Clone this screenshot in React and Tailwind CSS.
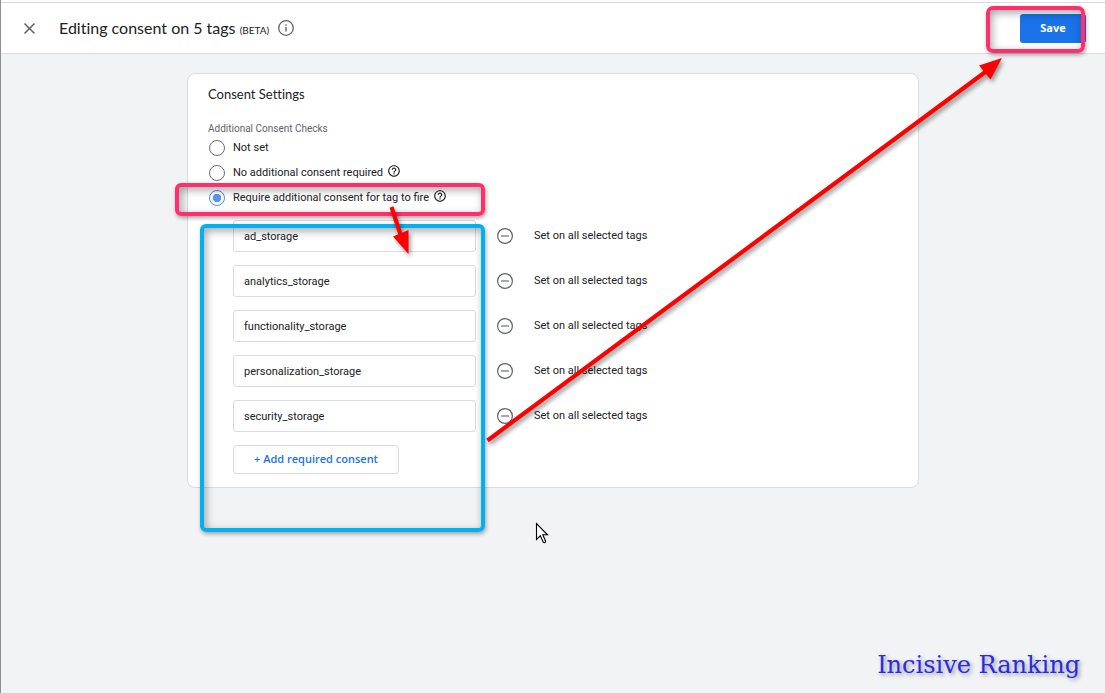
import React, { useState } from 'react'
import { MdClose, MdHelpOutline } from 'react-icons/md'

const checks = [
  { id: 'not-set', label: 'Not set', help: false },
  { id: 'none', label: 'No additional consent required', help: true },
  { id: 'require', label: 'Require additional consent for tag to fire', help: true },
]

const initialConsents = [
  'ad_storage',
  'analytics_storage',
  'functionality_storage',
  'personalization_storage',
  'security_storage',
]

// slivers of the page behind the sheet: [y, height, color]
const slivers = [
  [74, 1, '#1f4f9c'], [90, 1, '#5a4a3c'], [92, 3, '#3f6f94'], [95, 1, '#2b3f66'],
  [106, 1, '#6b5f50'], [107, 5, '#4f8296'], [122, 6, '#27406f'], [143, 1, '#2a5580'],
  [189, 1, '#8a5a40'], [190, 4, '#5c2f4a'], [292, 1, '#1f5fae'], [294, 2, '#5f7f9c'],
  [297, 1, '#2f4fa0'], [324, 3, '#1f5fae'], [329, 1, '#3f5f9c'], [453, 2, '#2f7fae'],
  [455, 2, '#2a3f9c'], [483, 1, '#1f4f5c'], [487, 4, '#4f8f8c'], [515, 1, '#1f4f5c'],
  [519, 4, '#4f8f8c'], [547, 2, '#2f6f9c'], [553, 2, '#4f5f9c'], [581, 2, '#5f4f9c'],
  [584, 2, '#1f5f8c'], [612, 2, '#1f3f9c'], [617, 1, '#2f4f7c'],
]

/* ───── Icons ───── */
function InfoIcon() {
  return (
    <svg width="18" height="18" viewBox="0 0 18 18" fill="none" stroke="#5f6368" aria-hidden="true">
      <circle cx="9" cy="9" r="7.3" strokeWidth="1.3" />
      <path d="M9 8v4.6M9 5.2v1.6" strokeWidth="1.4" />
    </svg>
  )
}

function MinusIcon() {
  return (
    <svg width="18" height="18" viewBox="0 0 18 18" fill="none" stroke="#5f6368" aria-hidden="true">
      <circle cx="9" cy="9" r="7.4" strokeWidth="1.2" />
      <path d="M5 9h8" strokeWidth="1.1" />
    </svg>
  )
}

function Pointer() {
  return (
    <svg
      width="14"
      height="22"
      viewBox="0 0 14 22"
      className="absolute left-[534px] top-[522px]"
      aria-hidden="true"
    >
      <path
        d="M1.5 1.5v16l3.800-3.700 3 6.400c.8 1 2.600.4 2.300-1L7.800 12.800h4.700z"
        fill="#fff"
        stroke="#000"
        strokeWidth="1.1"
      />
    </svg>
  )
}

/* ───── Arrows drawn over the sheet ───── */
function Arrows() {
  return (
    <svg
      width="1105"
      height="693"
      viewBox="0 0 1105 693"
      className="pointer-events-none absolute -left-px top-0 drop-shadow-[2px_3px_2px_rgba(0,0,0,0.4)]"
      aria-hidden="true"
    >
      <g stroke="#ff0000" fill="#ff0000">
        <path d="M487.5 440.5L986 71.5" strokeWidth="4.2" />
        <path d="M1002 58L979 65.5L990.5 79.5z" stroke="none" />
        <path d="M391.5 207L401 236" strokeWidth="4.2" />
        <path d="M408.5 254L393 236.5L408.5 230z" stroke="none" />
      </g>
    </svg>
  )
}

/* ───── Radio row ───── */
function CheckOption({ option, checked, onChange }) {
  return (
    <div className="flex h-[25px] items-center">
      <input
        type="radio"
        id={option.id}
        name="consent-check"
        checked={checked}
        onChange={() => onChange(option.id)}
        className="m-0 size-4 shrink-0 appearance-none rounded-full border border-[#6b6f74] bg-white checked:border-[#4e8df5] checked:bg-[radial-gradient(circle,#5a94f5_4px,#ffffff_4.5px)]"
      />
      <label htmlFor={option.id} className="ml-2 text-[11px] leading-4">
        {option.label}
      </label>
      {option.help && (
        <button type="button" aria-label="Help" className="mb-1 ml-1">
          <MdHelpOutline size={14} />
        </button>
      )}
    </div>
  )
}

/* ───── Consent row ───── */
function ConsentRow({ value, onChange }) {
  return (
    <div className="flex items-center">
      <input
        type="text"
        aria-label="Consent type"
        value={value}
        onChange={(e) => onChange(e.target.value)}
        className="h-8 w-[243px] rounded-[3px] border border-[#dadce0] bg-white px-[10px] text-[11px]"
      />
      <button type="button" aria-label="Remove consent" className="ml-5">
        <MinusIcon />
      </button>
      <span className="ml-5 text-[11px] leading-4">Set on all selected tags</span>
    </div>
  )
}

export default function App() {
  const [selected, setSelected] = useState('require')
  const [consents, setConsents] = useState(initialConsents)

  const updateConsent = (index, value) => {
    setConsents(consents.map((c, i) => (i === index ? value : c)))
  }

  return (
    <div className="relative flex min-h-screen flex-col overflow-hidden border-l border-[#8f8f8f] bg-[#f1f3f4] font-['Roboto',sans-serif] text-[#202124]">
      <header className="bg-white pt-[2px]">
        <div className="flex h-[52px] items-center justify-between border-y border-[#dadce0] px-[19px]">
          <div className="flex items-center">
            <button type="button" aria-label="Close" className="text-[#5f6368]">
              <MdClose size={19} />
            </button>
            <h1 className="ml-5 pt-[2px] font-['Lato',sans-serif] text-[16px] leading-6 [font-variant-ligatures:none]">
              Editing consent on 5 tags <span className="text-[10px]">(BETA)</span>
            </h1>
            <button type="button" aria-label="About this page" className="ml-2">
              <InfoIcon />
            </button>
          </div>
          <div className="relative">
            <button
              type="button"
              className="block h-[29px] w-[66px] rounded-[3px] bg-[#1a73e8] font-['Open_Sans',sans-serif] text-[11px] font-bold text-white"
            >
              Save
            </button>
            <div className="pointer-events-none absolute -left-[34px] -top-[8px] h-[47px] w-[99px] rounded-[7px] border-4 border-[#ff2e6c] shadow-[1px_2px_4px_rgba(0,0,0,0.35),inset_2px_3px_8px_rgba(0,0,0,0.35)]" />
          </div>
        </div>
      </header>

      <main className="px-5 pt-[19px]">
        <section className="relative mx-auto max-w-[732px] rounded-lg border border-[#dadce0] bg-white px-[20px] pb-[13px] pt-[11px]">
          <h2 className="font-['Lato',sans-serif] text-[13px] leading-[18px] [font-variant-ligatures:none]">
            Consent Settings
          </h2>

          <fieldset className="mt-5">
            <legend className="text-[10px] leading-3 text-[#5f6368]">Additional Consent Checks</legend>
            <div className="pl-[1px]">
              {checks.map((option) => (
                <CheckOption
                  key={option.id}
                  option={option}
                  checked={selected === option.id}
                  onChange={setSelected}
                />
              ))}
            </div>
          </fieldset>

          <div className="mt-[10px] flex flex-col gap-[13px] pl-[25px]">
            {consents.map((value, i) => (
              <ConsentRow key={i} value={value} onChange={(v) => updateConsent(i, v)} />
            ))}
            <button
              type="button"
              onClick={() => setConsents([...consents, ''])}
              className="h-[29px] w-[166px] rounded-[3px] border border-[#dadce0] font-['Open_Sans',sans-serif] text-[11px] font-semibold text-[#1a73e8]"
            >
              + Add required consent
            </button>
          </div>

          {/* Highlight frames */}
          <div className="pointer-events-none absolute -left-[13px] top-[109px] h-[33px] w-[310px] rounded-[6px] border-4 border-[#ff2e6c] shadow-[1px_2px_4px_rgba(0,0,0,0.35),inset_2px_3px_8px_rgba(0,0,0,0.35)]" />
          <div className="pointer-events-none absolute left-[12px] top-[150px] h-[308px] w-[285px] rounded-[6px] border-4 border-[#00b0f0] shadow-[1px_2px_4px_rgba(0,0,0,0.35),inset_2px_3px_8px_rgba(0,0,0,0.35)]" />
        </section>
      </main>

      <Arrows />
      <Pointer />

      <svg width="1" height="693" className="absolute -left-px top-0" aria-hidden="true">
        {slivers.map(([y, height, color]) => (
          <rect key={y} x="0" y={y} width="1" height={height} fill={color} />
        ))}
      </svg>

      <p className="mt-auto self-end pb-3 pr-[25px] font-['DejaVu_Serif',serif] text-[24px] leading-8 text-[#2a2ae6] [text-shadow:2px_2px_4px_rgba(0,0,0,0.4)]">
        Incisive Ranking
      </p>
    </div>
  )
}
